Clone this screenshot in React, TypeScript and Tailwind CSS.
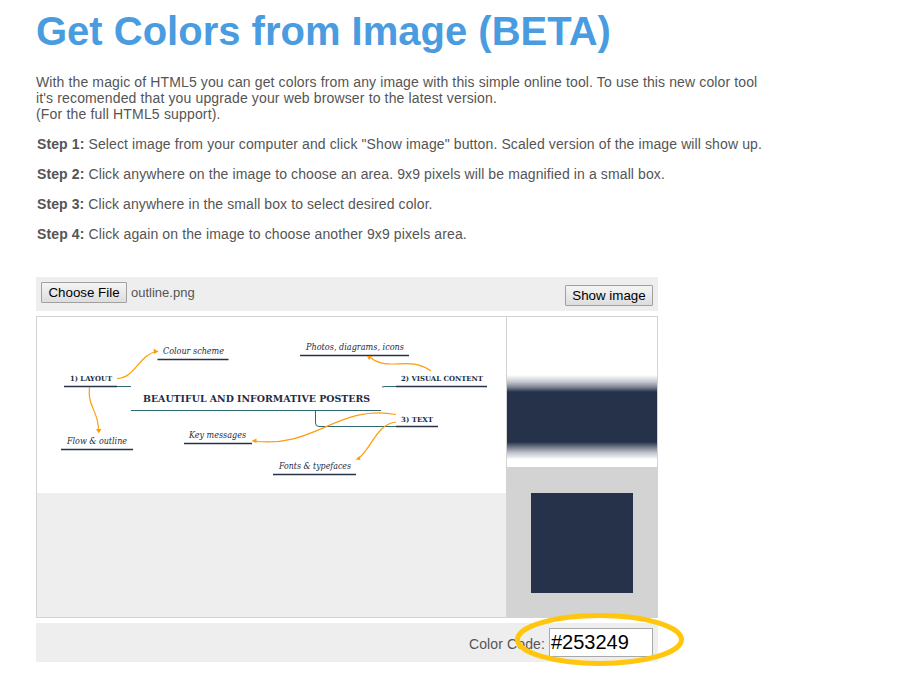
const steps = [
  { label: 'Step 1:', text: 'Select image from your computer and click "Show image" button. Scaled version of the image will show up.', spacing: 'tracking-[0.11px]' },
  { label: 'Step 2:', text: 'Click anywhere on the image to choose an area. 9x9 pixels will be magnified in a small box.', spacing: 'tracking-[0.11px]' },
  { label: 'Step 3:', text: 'Click anywhere in the small box to select desired color.', spacing: 'tracking-[0.09px]' },
  { label: 'Step 4:', text: 'Click again on the image to choose another 9x9 pixels area.', spacing: 'tracking-[0.12px]' },
];

type Label = { x: number; y: number; w: number; text: string; kind: 'italic' | 'bold' | 'title' };

const labels: Label[] = [
  { x: 126, y: 37, w: 61, text: 'Colour scheme', kind: 'italic' },
  { x: 269, y: 33, w: 98, text: 'Photos, diagrams, icons', kind: 'italic' },
  { x: 30, y: 127, w: 60, text: 'Flow & outline', kind: 'italic' },
  { x: 152, y: 121, w: 57, text: 'Key messages', kind: 'italic' },
  { x: 242, y: 152, w: 72, text: 'Fonts & typefaces', kind: 'italic' },
  { x: 33, y: 64, w: 42, text: '1) LAYOUT', kind: 'bold' },
  { x: 364, y: 64, w: 82, text: '2) VISUAL CONTENT', kind: 'bold' },
  { x: 364, y: 105, w: 32, text: '3) TEXT', kind: 'bold' },
  { x: 106, y: 85, w: 227, text: 'BEAUTIFUL AND INFORMATIVE POSTERS', kind: 'title' },
];

const labelStyle = {
  italic: 'italic text-[8.5px]',
  bold: 'font-bold text-[7px]',
  title: 'font-bold text-[10px]',
};

function MindMap() {
  return (
    <svg width="469" height="176" viewBox="0 0 469 176" className="block bg-white">
      <g stroke="#2a6a70" strokeWidth="1" fill="none">
        <path d="M80 69.5h14M94 93.5h250M345 70l3-.5h13M278.500 94v12q0 3.500 3.500 3.500h79" />
      </g>
      <g stroke="#27324b" strokeWidth="1.300" fill="none">
        <path d="M27 69.500h53M120.500 42.500h71M263 38.500h109M359 69.500h91M359 109.500h42M24 132.500h72M147 126.500h68M236 157.500h83" />
      </g>
      <g stroke="#ff9c0a" strokeWidth="1.200" fill="none">
        <path d="M80 61.500C98 61 102 38 119 34.500" />
        <path d="M52.500 70C50 90 62 94 61.500 114" />
        <path d="M394 54C372 38 352 55 334 41" />
        <path d="M359 97.500C300 87 278 132 217 124" />
        <path d="M359 105C340 107 335 130 322 141" />
      </g>
      <path d="M116.500 31.500l5 3-4.500 2.500zM59 112h5.500l-2.700 4.500zM330 39h5.500l-3.500 4zM214.500 124l5-2.500v4.500zM318.500 142.500l4-3.500 1 4z" fill="#ff9c0a" />
      {labels.map((l) => (
        <text
          key={l.text}
          x={l.x}
          y={l.y}
          textLength={l.w}
          lengthAdjust="spacingAndGlyphs"
          fill="#222c42"
          className={`font-['DejaVu_Serif','Liberation_Serif',serif] ${labelStyle[l.kind]}`}
        >
          {l.text}
        </text>
      ))}
    </svg>
  );
}

const buttonClass =
  'h-[21px] border border-[#a0a0a0] rounded-[1px] bg-linear-to-b from-[#f5f5f5] to-[#dddddd] text-black text-[13.33px] leading-[19px] whitespace-nowrap';

export default function App() {
  return (
    <main className="h-[677px] w-[911px] overflow-hidden bg-white pl-[36px] pt-[8px] font-['Liberation_Sans',Arial,sans-serif] text-[14px] leading-[16px] text-[#555555]">
      <h1 className="whitespace-nowrap text-[40px] font-bold leading-[46px] text-[#4a9ce1]">Get Colors from Image (BETA)</h1>
      <p className="mt-[20px] whitespace-nowrap">
        <span className="tracking-[0.125px]">With the magic of HTML5 you can get colors from any image with this simple online tool. To use this new color tool</span>
        <br />
        <span className="tracking-[0.14px]">it's recomended that you upgrade your web browser to the latest version.</span>
        <br />
        <span className="tracking-[0.17px]">(For the full HTML5 support).</span>
      </p>
      <div className="mt-[14px] flex flex-col gap-[14px] pl-px">
        {steps.map((s) => (
          <p key={s.label} className={`whitespace-nowrap ${s.spacing}`}>
            <strong>{s.label}</strong> {s.text}
          </p>
        ))}
      </div>

      <section className="mt-[35px] w-[622px]">
        <div className="flex h-[34px] justify-between bg-[#eeeeee] pl-[5px] pr-[5px]">
          <div className="flex pt-[5px]">
            <button className={`${buttonClass} w-[86px]`}>Choose File</button>
            <span className="ml-[4px] mt-[3px] text-[13px]">outline.png</span>
          </div>
          <button className={`${buttonClass} mt-[8px] w-[88px]`}>Show image</button>
        </div>

        <div className="mt-[5px] flex h-[302px] border border-[#d3d3d3]">
          <div className="w-[469px] bg-[#eeeeee]">
            <MindMap />
          </div>
          <div className="w-[151px] border-l border-[#d3d3d3] bg-[#d3d3d3]">
            <div className="h-[150px] bg-[linear-gradient(to_bottom,#fff_0px,#fff_58px,#e6e7ea_61px,#c3c6cd_65px,#7f8795_70px,#253249_75px,#253249_125px,#7f8795_131px,#c3c6cd_136px,#e6e7ea_140px,#fff_142px)]" />
            <div className="ml-[24px] mt-[26px] h-[100px] w-[102px] bg-[#253249]" />
          </div>
        </div>

        <div className="relative mt-[5px] flex h-[39px] justify-end bg-[#eeeeee] pr-[5px] pt-[5px]">
          <span className="mr-[4px] mt-[8px] tracking-[0.12px]">Color Code:</span>
          <div className="h-[29px] w-[104px] border border-[#a9a9a9] bg-white pl-px text-[20px] leading-[26px] text-black">#253249</div>
          <svg width="174" height="56" viewBox="0 0 174 56" className="absolute left-[477px] top-[-12px]">
            <ellipse cx="86.500" cy="28.500" rx="82" ry="24" fill="none" stroke="#ffc60d" strokeWidth="5" />
          </svg>
        </div>
      </section>
    </main>
  );
}
